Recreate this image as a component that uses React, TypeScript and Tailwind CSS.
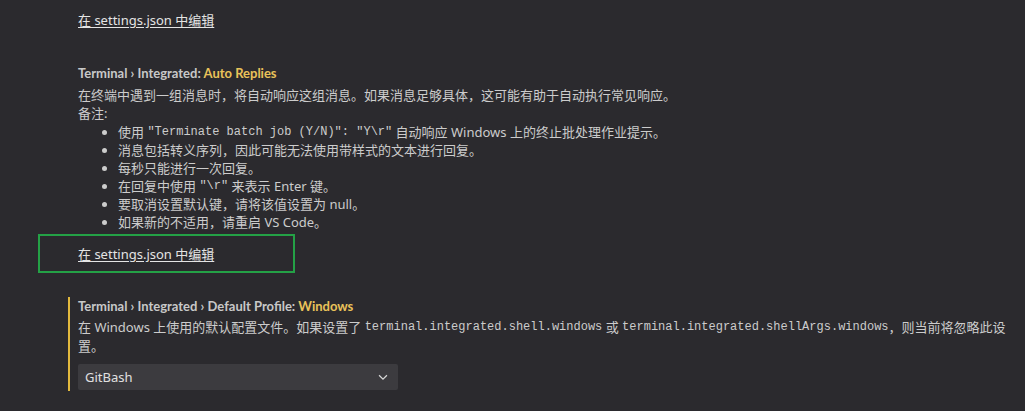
import React from "react";

function Code({ children }: { children: React.ReactNode }) {
    return (
        <span className="inline-block align-top leading-[inherit] font-['Consolas','Liberation_Mono',monospace] text-[12px]">
            {children}
        </span>
    );
}

function EditLink() {
    return (
        <a href="#" className="text-[#e4e4e4] underline underline-offset-2">
            在 settings.json 中编辑
        </a>
    );
}

function Title({ path, name }: { path: string; name: string }) {
    return (
        <div className="font-bold text-[#c8c8c8] leading-[18px] font-['Lato','Noto_Sans',sans-serif]">
            {path}
            <span className="text-[#e9c25a]">{name}</span>
        </div>
    );
}

const notes: React.ReactNode[] = [
    <>
        使用 <Code>"Terminate batch job (Y/N)": "Y\r"</Code> 自动响应 Windows 上的终止批处理作业提示。
    </>,
    "消息包括转义序列，因此可能无法使用带样式的文本进行回复。",
    "每秒只能进行一次回复。",
    <>
        在回复中使用 <Code>"\r"</Code> 来表示 Enter 键。
    </>,
    "要取消设置默认键，请将该值设置为 null。",
    "如果新的不适用，请重启 VS Code。",
];

export default function App() {
    return (
        <div className="w-[1025px] h-[411px] overflow-hidden bg-[#2b2a2e] text-[#cccccc] text-[13px] leading-[18px] font-['Segoe_UI','Noto_Sans','Noto_Sans_CJK_SC',sans-serif]">
            {/* previous setting tail */}
            <div className="pl-[78px] pt-[11px]">
                <EditLink />
            </div>

            {/* Auto Replies */}
            <div className="pl-[78px] mt-[35px]">
                <Title path="Terminal › Integrated: " name="Auto Replies" />
                <div className="mt-[4px]">
                    在终端中遇到一组消息时，将自动响应这组消息。如果消息足够具体，这可能有助于自动执行常见响应。
                </div>
                <div className="h-[18px]">备注:</div>
                <ul className="mt-[1px] pl-[40px] list-disc">
                    {notes.map((n, i) => (
                        <li key={i} className="h-[18px] leading-[18px]">
                            {n}
                        </li>
                    ))}
                </ul>
            </div>
            <div className="ml-[38px] mt-[3px] w-[257px] h-[39px] border-2 border-[#24a146] flex items-center pl-[38px]">
                <EditLink />
            </div>

            {/* Default Profile */}
            <div className="ml-[68px] mt-[24px] border-l-2 border-[#e2b93d] pl-[8px] pb-[1px]">
                <Title path="Terminal › Integrated › Default Profile: " name="Windows" />
                <div className="mt-[3px] leading-[19px]">
                    在 Windows 上使用的默认配置文件。如果设置了 <Code>terminal.integrated.shell.windows</Code> 或{" "}
                    <Code>terminal.integrated.shellArgs.windows</Code>，则当前将忽略此设置。
                </div>
                <div className="mt-[8px] w-[320px] h-[26px] rounded-[2px] bg-[#3c3b3f] flex items-center justify-between pl-[7px] pr-[8px] text-[#e0e0e0]">
                    <span>GitBash</span>
                    <svg width="14" height="14" viewBox="0 0 16 16" fill="none">
                        <path d="M3.5 6l4.5 4.5L12.5 6" stroke="#d8d8d8" strokeWidth="1.4" />
                    </svg>
                </div>
            </div>
        </div>
    );
}
